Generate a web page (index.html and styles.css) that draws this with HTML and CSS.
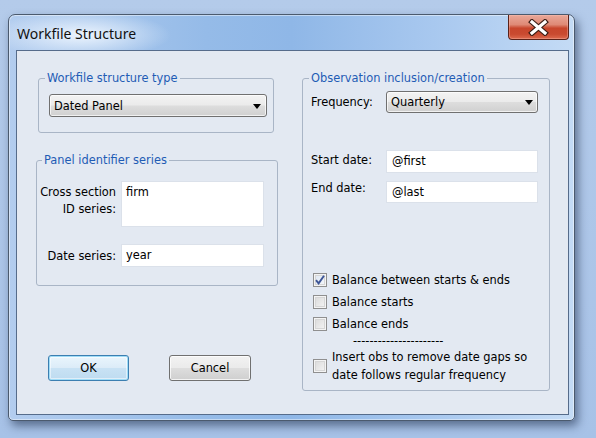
FILE: index.html
```html
<!DOCTYPE html>
<html>
<head>
<meta charset="utf-8">
<link rel="stylesheet" href="styles.css">
</head>
<body>
<div class="window">
  <div class="titlebar">
    <span class="title">Workfile Structure</span>
    <div class="close">
      <svg width="21" height="17" viewBox="0 0 21 17">
        <path d="M4 3 L17 14 M17 3 L4 14" stroke="#3a1c14" stroke-width="5.5" stroke-linecap="square" fill="none"/>
        <path d="M4 3 L17 14 M17 3 L4 14" stroke="#ffffff" stroke-width="3.2" stroke-linecap="square" fill="none"/>
      </svg>
    </div>
  </div>
  <div class="client">
    <div class="col-left">
      <fieldset class="group g-type">
        <legend>Workfile structure type</legend>
        <div class="combo combo-type"><span>Dated Panel</span><span class="arrow"></span></div>
      </fieldset>
      <fieldset class="group g-panel">
        <legend>Panel identifier series</legend>
        <div class="row">
          <div class="lbl lbl-multi">Cross section<br>ID series:</div>
          <div class="field area">firm</div>
        </div>
        <div class="row row-date">
          <div class="lbl lbl-single">Date series:</div>
          <div class="field line">year</div>
        </div>
      </fieldset>
      <div class="buttons">
        <div class="btn btn-ok">OK</div>
        <div class="btn btn-cancel">Cancel</div>
      </div>
    </div>
    <div class="col-right">
      <fieldset class="group g-obs">
        <legend>Observation inclusion/creation</legend>
        <div class="orow">
          <div class="olbl olbl-freq">Frequency:</div>
          <div class="combo combo-freq"><span>Quarterly</span><span class="arrow"></span></div>
        </div>
        <div class="orow orow-start">
          <div class="olbl olbl-start">Start date:</div>
          <div class="field ofield">@first</div>
        </div>
        <div class="orow orow-end">
          <div class="olbl">End date:</div>
          <div class="field ofield ofield-end">@last</div>
        </div>
        <div class="checks">
          <div class="chk"><span class="box checked"><svg width="12" height="12" viewBox="0 0 12 12"><path d="M2 6.2 L4.6 9.4 L10 1.8" stroke="#3d5596" stroke-width="1.9" fill="none"/></svg></span><span>Balance between starts &amp; ends</span></div>
          <div class="chk"><span class="box"></span><span>Balance starts</span></div>
          <div class="chk"><span class="box"></span><span>Balance ends</span></div>
          <div class="dashes"><span class="dash-text">----------------------</span></div>
          <div class="chk chk-multi"><span class="box"></span><span>Insert obs to remove date gaps so<br>date follows regular frequency</span></div>
        </div>
      </fieldset>
    </div>
  </div>
</div>
</body>
</html>
```
FILE: styles.css
```css
html, body {
  margin: 0;
  padding: 0;
}
body {
  width: 596px;
  height: 438px;
  overflow: hidden;
  background: linear-gradient(to bottom, #b4cbea, #a7c2e7);
  font-family: "DejaVu Sans", Verdana, sans-serif;
  font-size: 11.4px;
  color: #000;
}
.window {
  box-sizing: border-box;
  margin: 14px 0 0 8px;
  width: 567px;
  height: 407px;
  border: 1px solid #4b5a6e;
  border-radius: 7px 7px 5px 5px;
  background:
    radial-gradient(ellipse 90px 24px at 72px 20px, rgba(240,247,255,0.95), rgba(240,247,255,0) 100%),
    linear-gradient(to right, #b3cdef 0%, #95bbe8 35%, #8fb7e7 50%, #a8c8ef 75%, #c4dbf5 100%);
  box-shadow: 3px 5px 10px rgba(25, 40, 70, 0.55), inset 0 0 0 1px rgba(255,255,255,0.45);
  padding: 0 4px 5px 7px;
  display: flex;
  flex-direction: column;
}
.titlebar {
  height: 35px;
  display: flex;
  align-items: flex-start;
  justify-content: space-between;
}
.title {
  font-family: "Noto Sans", "Open Sans", sans-serif;
  font-size: 14px;
  line-height: 20px;
  margin: 9px 0 0 1px;
  color: #111;
}
.close {
  width: 61px;
  height: 25px;
  box-sizing: border-box;
  border: 1px solid #5a2219;
  border-top: none;
  border-radius: 0 0 4px 4px;
  background: linear-gradient(to bottom, #e9a899 0%, #df8a76 40%, #c8462c 55%, #c94a30 80%, #dd6a4e 100%);
  box-shadow: inset 0 0 0 1px rgba(255,200,190,0.35);
  display: flex;
  align-items: center;
  justify-content: center;
  margin-right: 1px;
}
.close svg { display: block; }
.client {
  box-sizing: border-box;
  width: 553px;
  height: 365px;
  border: 1px solid #566c8b;
  background: #e3e9f2;
  padding: 20px 0 0 19px;
  display: flex;
  align-items: flex-start;
}
.col-left {
  width: 242px;
  display: flex;
  flex-direction: column;
}
.col-right {
  margin-left: 24px;
  width: 248px;
}
.group {
  box-sizing: border-box;
  margin: 0;
  border: 1px solid #a9b5c6;
  border-radius: 3px;
  min-width: 0;
}
.group legend {
  color: #1f5cb5;
  font-size: 11.4px;
  line-height: 15px;
  padding: 0 2px;
}
.g-type {
  width: 236px;
  margin-left: 2px;
  padding: 8px 5px 15px 10px;
}
.g-type legend { margin-left: -4px; }
.combo {
  box-sizing: border-box;
  border: 1px solid #707070;
  border-radius: 3px;
  background: linear-gradient(to bottom, #f3f3f3 0%, #ebebeb 48%, #dddddd 52%, #d0d0d0 100%);
  box-shadow: inset 0 0 0 1px rgba(255,255,255,0.7);
  display: flex;
  align-items: center;
  justify-content: space-between;
  padding: 0 5px 0 4px;
}
.combo-type { width: 218px; height: 23px; }
.combo-freq { width: 152px; height: 22px; padding-right: 4px; }
.arrow {
  width: 0;
  height: 0;
  border-left: 4.5px solid transparent;
  border-right: 4.5px solid transparent;
  border-top: 5px solid #000;
  margin-top: 1px;
}
.g-panel {
  width: 242px;
  margin-top: 20px;
  padding: 13px 0 18px 0;
}
.g-panel legend { margin-left: 5px; }
.row {
  display: flex;
  align-items: flex-start;
}
.row-date {
  margin-top: 17px;
  align-items: center;
}
.lbl {
  width: 79px;
  margin-right: 5px;
  text-align: right;
  white-space: nowrap;
}
.lbl-multi {
  line-height: 17px;
  padding-top: 3px;
}
.field {
  box-sizing: border-box;
  background: #fff;
  border: 1px solid #dbe1ea;
  padding: 0 4px;
  line-height: 15px;
}
.area {
  width: 143px;
  height: 46px;
  padding-top: 3px;
}
.line {
  width: 143px;
  height: 23px;
  display: flex;
  align-items: center;
}
.buttons {
  display: flex;
  margin-top: 69px;
  margin-left: 12px;
}
.btn {
  box-sizing: border-box;
  height: 26px;
  border-radius: 3px;
  border: 1px solid #707070;
  background: linear-gradient(to bottom, #f2f2f2 0%, #ebebeb 48%, #dddddd 52%, #cfcfcf 100%);
  box-shadow: inset 0 0 0 1px rgba(255,255,255,0.75);
  display: flex;
  align-items: center;
  justify-content: center;
}
.btn-ok {
  width: 81px;
  border-color: #3c7fb1;
  box-shadow: inset 0 0 0 1px #9fdcf7, inset 0 0 0 2px rgba(255,255,255,0.5);
  background: linear-gradient(to bottom, #eaf6fd 0%, #dcecf8 48%, #c8e2f4 52%, #bedbf0 100%);
}
.btn-cancel {
  width: 82px;
  margin-left: 40px;
}
.g-obs {
  width: 248px;
  padding: 5px 10px 6px 8px;
}
.g-obs legend { margin-left: -2px; }
.orow {
  display: flex;
  align-items: flex-start;
}
.olbl {
  width: 75px;
  line-height: 15px;
}
.olbl-freq { padding-top: 4px; }
.olbl-start { padding-top: 3px; }
.orow-start { margin-top: 37px; }
.orow-end { margin-top: 8px; }
.ofield {
  width: 152px;
  height: 23px;
  display: flex;
  align-items: center;
  padding-left: 5px;
}
.ofield-end { height: 22px; }
.checks {
  margin-top: 66px;
  display: flex;
  flex-direction: column;
}
.chk {
  display: flex;
  align-items: center;
  height: 22px;
}
.box {
  box-sizing: border-box;
  width: 14px;
  height: 14px;
  margin-left: 2px;
  margin-right: 5px;
  border: 1px solid #8f8f8f;
  background: linear-gradient(135deg, #d8d8d8, #f6f6f6);
  box-shadow: inset 0 0 0 1px #f4f4f4, inset 0 0 0 2px #d6d6d6;
  display: flex;
  align-items: center;
  justify-content: center;
  flex: none;
}
.box.checked {
  background: linear-gradient(135deg, #dde6f2, #f6f8fb);
}
.box svg { display: block; }
.dashes {
  height: 13px;
  line-height: 13px;
  display: flex;
}
.dash-text {
  margin-left: 42px;
}
.chk-multi {
  height: auto;
  line-height: 18px;
}
```
